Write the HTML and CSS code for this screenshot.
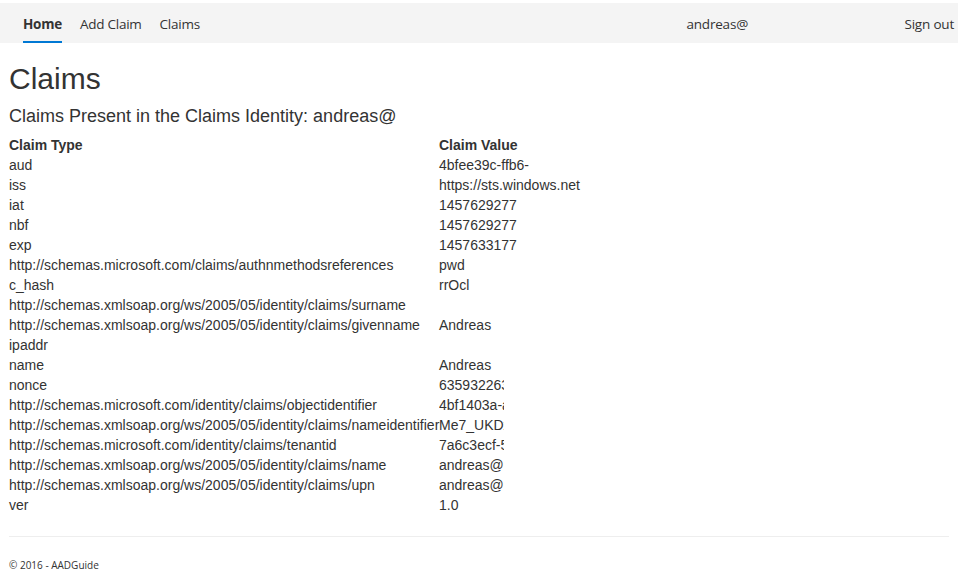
FILE: index.html
```html
<!DOCTYPE html>
<html>
<head>
<meta charset="utf-8">
<link rel="stylesheet" href="styles.css">
</head>
<body>
<nav class="navbar">
  <ul class="nav-left">
    <li class="nav-item active">Home</li>
    <li class="nav-item">Add Claim</li>
    <li class="nav-item">Claims</li>
  </ul>
  <div class="nav-user">andreas@</div>
  <div class="nav-signout">Sign out</div>
</nav>
<main class="content">
  <h1 class="title">Claims</h1>
  <h3 class="subtitle">Claims Present in the Claims Identity: andreas@</h3>
  <div class="claims">
    <div class="head">Claim Type</div><div class="head">Claim Value</div>
    <div class="type">aud</div><div class="val">4bfee39c-ffb6-</div>
    <div class="type">iss</div><div class="val">https://sts.windows.net</div>
    <div class="type">iat</div><div class="val">1457629277</div>
    <div class="type">nbf</div><div class="val">1457629277</div>
    <div class="type">exp</div><div class="val">1457633177</div>
    <div class="type">http://schemas.microsoft.com/claims/authnmethodsreferences</div><div class="val">pwd</div>
    <div class="type">c_hash</div><div class="val">rrOcl</div>
    <div class="type">http://schemas.xmlsoap.org/ws/2005/05/identity/claims/surname</div><div class="val"></div>
    <div class="type">http://schemas.xmlsoap.org/ws/2005/05/identity/claims/givenname</div><div class="val">Andreas</div>
    <div class="type">ipaddr</div><div class="val"></div>
    <div class="type">name</div><div class="val">Andreas</div>
    <div class="type">nonce</div><div class="val"><span class="clip">635932263000</span></div>
    <div class="type">http://schemas.microsoft.com/identity/claims/objectidentifier</div><div class="val"><span class="clip">4bf1403a-a000</span></div>
    <div class="type">http://schemas.xmlsoap.org/ws/2005/05/identity/claims/nameidentifier</div><div class="val"><span class="clip">Me7_UKDxxxx</span></div>
    <div class="type">http://schemas.microsoft.com/identity/claims/tenantid</div><div class="val"><span class="clip">7a6c3ecf-5000</span></div>
    <div class="type">http://schemas.xmlsoap.org/ws/2005/05/identity/claims/name</div><div class="val">andreas@</div>
    <div class="type">http://schemas.xmlsoap.org/ws/2005/05/identity/claims/upn</div><div class="val">andreas@</div>
    <div class="type">ver</div><div class="val">1.0</div>
  </div>
  <hr class="rule">
  <footer class="footer">© 2016 - AADGuide</footer>
</main>
</body>
</html>
```
FILE: styles.css
```css
html, body {
  margin: 0;
  padding: 0;
  background: #fff;
}
body {
  font-family: "Liberation Sans", Arial, sans-serif;
  color: #333;
}
.navbar {
  margin-top: 3px;
  height: 40px;
  background: #f4f4f4;
  display: flex;
  align-items: stretch;
  font-family: "Open Sans", "Noto Sans", sans-serif;
  font-size: 13.5px;
  color: #333;
}
.nav-left {
  list-style: none;
  margin: 0;
  padding: 0 0 0 23px;
  display: flex;
  gap: 18px;
  flex: 1;
}
.nav-item {
  display: flex;
  align-items: center;
  box-sizing: border-box;
  padding-top: 4px;
  border-bottom: 2px solid transparent;
  letter-spacing: -0.25px;
}
.nav-item.active {
  font-weight: 700;
  border-bottom-color: #0078d4;
}
.nav-user {
  display: flex;
  align-items: center;
  padding-top: 2px;
  width: 218px;
  letter-spacing: -0.2px;
}
.nav-signout {
  display: flex;
  align-items: center;
  padding-top: 2px;
  padding-right: 4px;
  letter-spacing: -0.2px;
}
.content {
  padding: 0 9px;
}
.title {
  margin: 18px 0 0 0;
  font-size: 30px;
  font-weight: 400;
  line-height: 36px;
}
.subtitle {
  margin: 8px 0 8px 0;
  font-size: 18px;
  font-weight: 400;
  line-height: 22px;
}
.claims {
  display: grid;
  grid-template-columns: 430px 1fr;
  font-size: 14px;
  line-height: 20px;
  white-space: nowrap;
}
.head {
  font-weight: 700;
}
.clip {
  display: inline-block;
  width: 65px;
  overflow: hidden;
  vertical-align: top;
}
.rule {
  margin: 21px 0 0 0;
  border: 0;
  border-top: 1px solid #eee;
}
.footer {
  font-family: "Open Sans", "Noto Sans", sans-serif;
  font-size: 10px;
  margin-top: 20px;
  line-height: 16px;
  color: #333;
}
```
